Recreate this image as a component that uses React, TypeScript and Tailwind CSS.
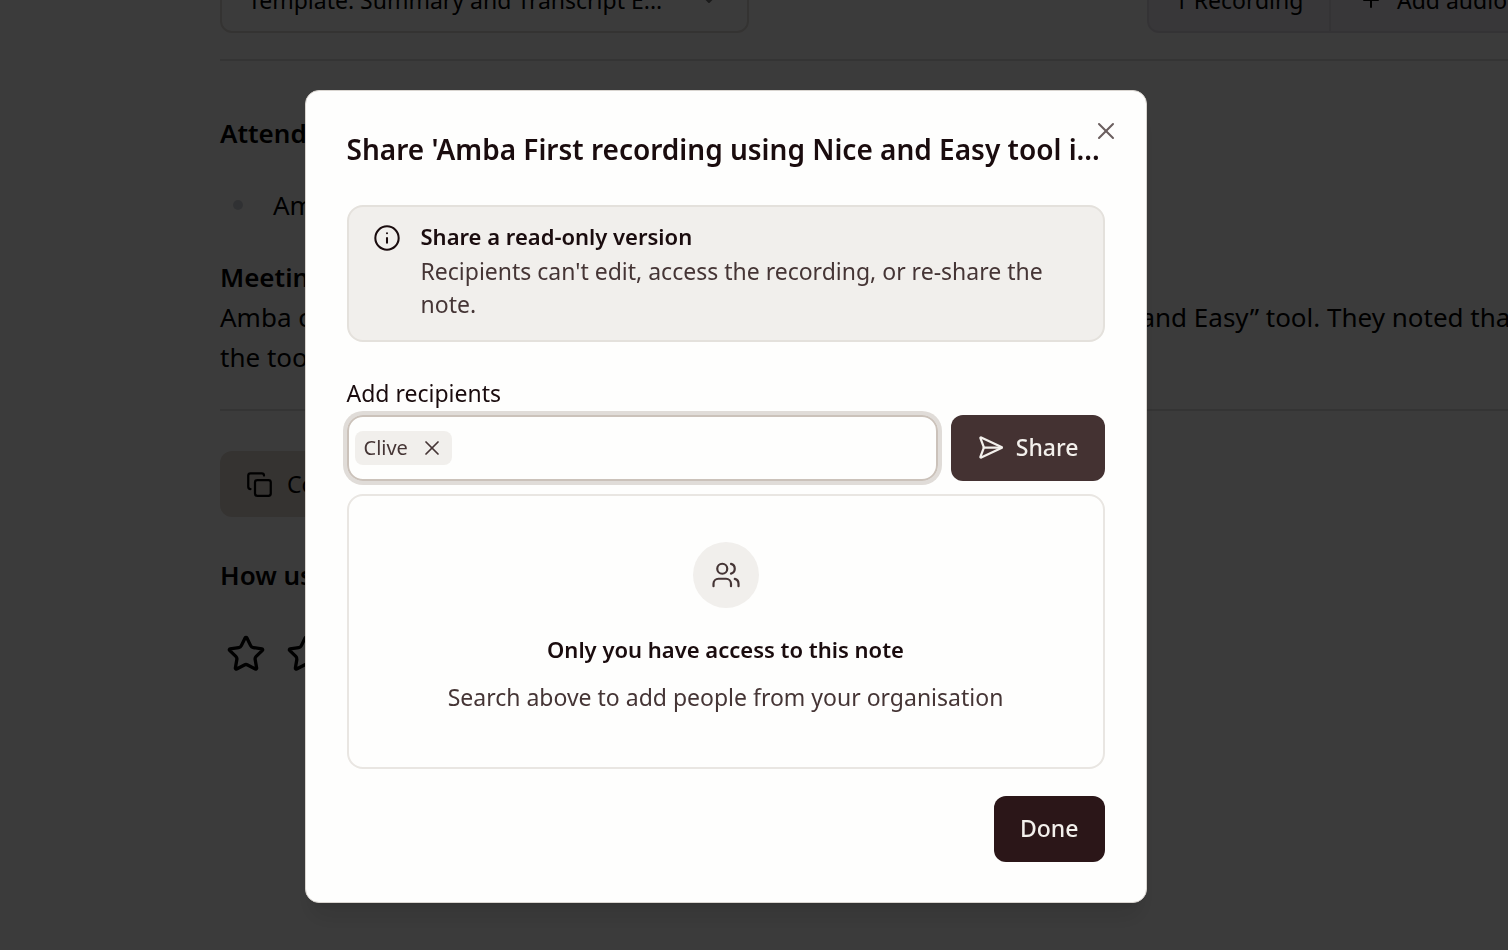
import { useState } from 'react';
import { ChevronDown, Copy, Info, Plus, SendHorizontal, Star, Users, X } from 'lucide-react';

function NotePage() {
    return (
        <main className="-mr-20 pl-[220px] text-[26px] leading-10 text-black">
            <div className="-mt-[33px] flex h-[66px] items-stretch justify-between">
                <div className="relative w-[529px]">
                    <select
                        aria-label="Template"
                        className="h-full w-full appearance-none rounded-xl border-2 border-[#e0dcd6] bg-white pl-[26px] pr-16 text-[23px]"
                    >
                        <option>Template: Summary and Transcript E...</option>
                    </select>
                    <ChevronDown className="pointer-events-none absolute right-7 top-5 h-6 w-6 text-neutral-500" />
                </div>
                <div className="flex w-[441px] rounded-xl border-2 border-[#e2dce6] bg-[#f0edf5] text-[23px]">
                    <button type="button" className="w-[182px] border-r-2 border-[#e2dce6]">1 Recording</button>
                    <button type="button" className="flex items-center gap-[14px] pl-7">
                        <Plus className="h-6 w-6" />
                        Add audio
                    </button>
                </div>
            </div>

            <hr className="mt-[26px] border-t-2 border-[#e0e0e0]" />

            <h2 className="mt-[52px] font-semibold">Attendees</h2>
            <ul className="mt-8">
                <li className="flex items-center gap-[30px] pl-[13px]">
                    <span className="h-[10px] w-[10px] rounded-full bg-[#d1d5db]" />
                    Amba
                </li>
            </ul>
            <h2 className="mt-8 font-semibold">Meeting overview</h2>
            <p className="whitespace-nowrap">
                Amba conducted their first recording sessions in order to test out the “Nice and Easy” tool. They noted that
                <br />
                the tool was simple to use.
            </p>

            <hr className="mt-8 border-t-2 border-[#e0e0e0]" />

            <button
                type="button"
                className="mt-10 flex h-[66px] items-center gap-[14px] rounded-xl bg-[#e4dcd4] px-[26px] text-[23px]"
            >
                <Copy className="h-[27px] w-[27px]" />
                Copy note
            </button>
            <h2 className="mt-[38px] font-semibold">How useful was this summary?</h2>
            <div className="mt-[39px] flex gap-5 pl-[6px]">
                {[1, 2, 3, 4, 5].map((n) => (
                    <button key={n} type="button" aria-label={`${n} stars`}>
                        <Star className="h-10 w-10" />
                    </button>
                ))}
            </div>
        </main>
    );
}

function ShareModal() {
    const [recipients, setRecipients] = useState(['Clive']);

    return (
        <div
            role="dialog"
            aria-modal="true"
            aria-labelledby="share-title"
            className="relative w-full max-w-[842px] rounded-[14px] border border-[#d9d5d0] bg-[#fefefd] px-[41px] py-10 text-[23px] text-[#1a0c0e] shadow-xl"
        >
            <button type="button" aria-label="Close" className="absolute right-[26px] top-[26px] text-[#6b5f5f]">
                <X className="h-7 w-7" strokeWidth={1.75} />
            </button>

            <h1 id="share-title" className="whitespace-nowrap text-[28px] font-semibold leading-9">
                Share 'Amba First recording using Nice and Easy tool i...
            </h1>

            <section className="mt-[38px] flex gap-5 rounded-2xl border-2 border-[#e4e1dc] bg-[#f1efec] pb-[19px] pl-6 pr-10 pt-[17px]">
                <Info className="h-7 w-7 shrink-0" strokeWidth={1.75} />
                <div>
                    <h2 className="text-[22px] font-semibold leading-6">Share a read-only version</h2>
                    <p className="mt-[7px] leading-[33px] text-[#453535]">
                        Recipients can't edit, access the recording, or re-share the note.
                    </p>
                </div>
            </section>

            <label htmlFor="recipients" className="mt-[39px] block leading-6">
                Add recipients
            </label>
            <div className="mt-[10px] flex h-[66px] gap-[13px]">
                <div className="flex min-w-0 flex-1 items-center gap-2 rounded-2xl border-2 border-[#cbc2ba] px-[6px] ring-4 ring-[#e0dcd8]">
                    {recipients.map((name) => (
                        <span
                            key={name}
                            className="flex h-[34px] items-center gap-3 rounded-lg bg-[#f1efec] pl-[9px] pr-2 text-[20px] text-[#453535]"
                        >
                            {name}
                            <button
                                type="button"
                                aria-label={`Remove ${name}`}
                                onClick={() => setRecipients(recipients.filter((r) => r !== name))}
                            >
                                <X className="h-6 w-6" strokeWidth={1.75} />
                            </button>
                        </span>
                    ))}
                    <input id="recipients" type="text" className="min-w-0 flex-1 bg-transparent outline-none" />
                </div>
                <button
                    type="button"
                    className="flex items-center gap-3 rounded-xl bg-[#443232] px-[26px] font-medium text-[#f3f0ec]"
                >
                    <SendHorizontal className="h-[27px] w-[27px]" />
                    Share
                </button>
            </div>

            <section className="mt-[13px] flex flex-col items-center rounded-2xl border-2 border-[#e9e6e2] pb-[54px] pt-[46px]">
                <div className="flex h-[66px] w-[66px] items-center justify-center rounded-full bg-[#f1efec] text-[#453535]">
                    <Users className="h-[30px] w-[30px]" strokeWidth={1.75} />
                </div>
                <h2 className="mt-[25px] text-[22px] font-semibold leading-8">Only you have access to this note</h2>
                <p className="mt-4 leading-8 text-[#453535]">Search above to add people from your organisation</p>
            </section>

            <div className="mt-[27px] flex justify-end">
                <button type="button" className="h-[66px] rounded-xl bg-[#2b1618] px-[26px] font-medium text-[#f3f0ec]">
                    Done
                </button>
            </div>
        </div>
    );
}

export default function App() {
    return (
        <div className="relative h-screen overflow-hidden bg-white font-['Noto_Sans',sans-serif]">
            <NotePage />
            <div className="fixed inset-0 flex items-center justify-center bg-black/77 pr-[57px] pt-[42px]">
                <ShareModal />
            </div>
        </div>
    );
}
